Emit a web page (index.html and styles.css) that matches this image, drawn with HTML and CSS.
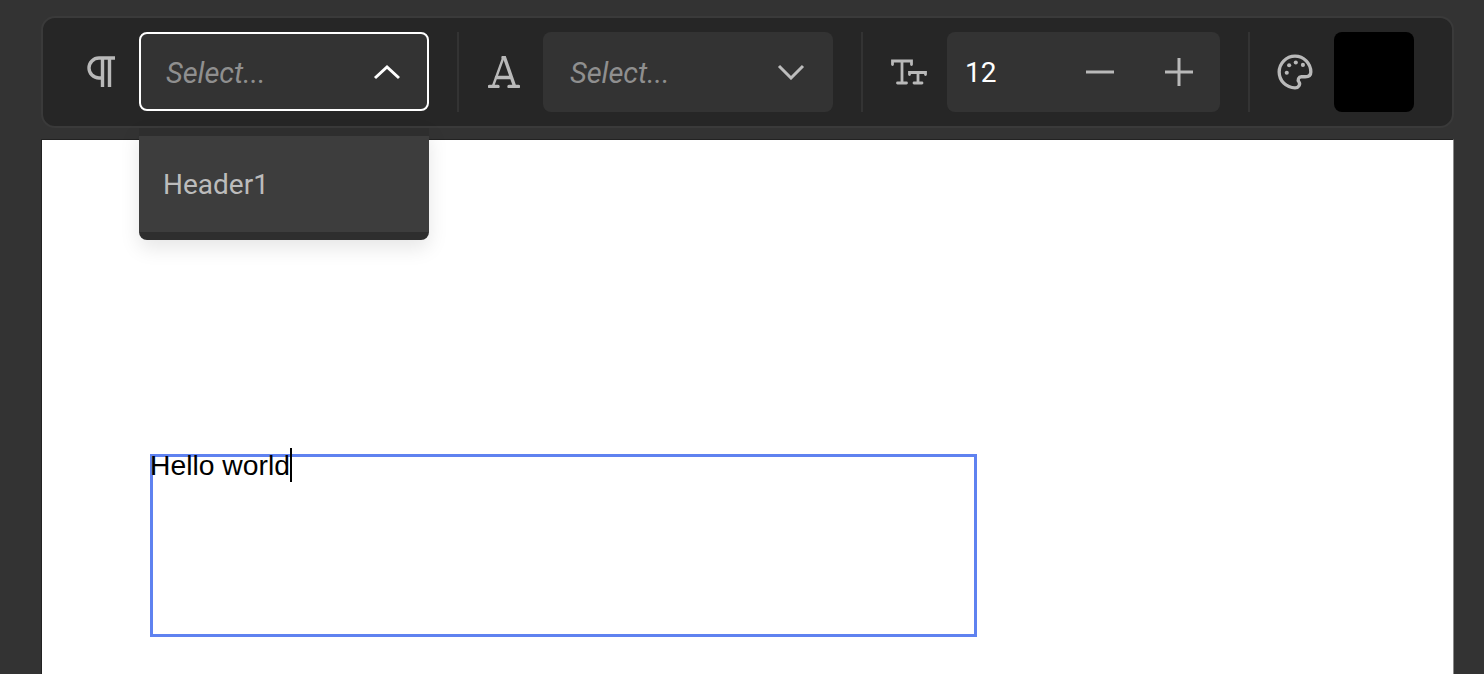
FILE: index.html
```html
<!DOCTYPE html>
<html lang="en">
<head>
<meta charset="utf-8">
<title>Editor</title>
<link rel="stylesheet" href="styles.css">
</head>
<body>
<div class="page">
  <div class="toolbar">
    <svg class="icon icon-para" viewBox="0 0 30 32" aria-hidden="true">
      <path d="M29 2H13a10 10 0 0 0 0 20H16.500M16.500 2V31M23.500 2V31"/>
    </svg>
    <div class="select select-open">
      <span class="placeholder">Select...</span>
      <svg class="chev chev-open" viewBox="0 0 28 16" aria-hidden="true"><path d="M2 14L14 3L26 14"/></svg>
      <div class="menu">
        <div class="menu-item">Header1</div>
      </div>
    </div>
    <div class="divider div-a"></div>
    <svg class="icon icon-font" viewBox="0 0 32 32" aria-hidden="true">
      <path class="thin" d="M15 2.500L5 30"/>
      <path d="M15 1.500H16.500L26.500 30M8.500 21.500H22.500M1.500 30.500H10M21 30.500H30.500"/>
    </svg>
    <div class="select">
      <span class="placeholder">Select...</span>
      <svg class="chev" viewBox="0 0 28 16" aria-hidden="true"><path d="M2 2L14 14L26 2"/></svg>
    </div>
    <div class="divider div-b"></div>
    <svg class="icon icon-size" viewBox="0 0 37 26" aria-hidden="true">
      <path d="M2.500 5.500V2H21.500V5.500M12 2V24M7.500 24H16.500M19.500 15.500V13.500H35.500V15.500M28 13.500V24M24 24H32"/>
    </svg>
    <div class="stepper">
      <span class="value">12</span>
      <svg class="step step-minus" viewBox="0 0 30 30" aria-hidden="true"><path d="M1 15H29"/></svg>
      <svg class="step step-plus" viewBox="0 0 30 30" aria-hidden="true"><path d="M1 15H29M15 1V29"/></svg>
    </div>
    <div class="divider div-c"></div>
    <svg class="icon icon-palette" viewBox="0 0 24 24" aria-hidden="true">
      <path d="M12 22a10 10 0 1 1 10-10c0 2.500-2 3-3.500 3H16a2 2 0 0 0-1.500 3.300c.5.7.5 1.700 0 2.400-.5.800-1.500 1.300-2.500 1.300z"/>
      <circle class="dot" cx="6.800" cy="12.500" r="1.300"/>
      <circle class="dot" cx="8.300" cy="7.700" r="1.300"/>
      <circle class="dot" cx="12.500" cy="6" r="1.300"/>
      <circle class="dot" cx="17" cy="7.500" r="1.300"/>
    </svg>
    <div class="swatch"></div>
  </div>
  <div class="canvas">
    <div class="textbox"><span class="textline">Hello world<span class="caret"></span></span></div>
  </div>
</div>
</body>
</html>
```
FILE: styles.css
```css
html, body {
  margin: 0;
  height: 100%;
  overflow: hidden;
  background: #333333;
}
body {
  font-family: Roboto, "Liberation Sans", sans-serif;
}
.page {
  height: 674px;
  padding: 16px 30px 0 41px;
  box-sizing: border-box;
  display: flex;
  flex-direction: column;
}
.toolbar {
  display: flex;
  align-items: center;
  height: 112px;
  box-sizing: border-box;
  flex: none;
  padding: 0 0 0 44px;
  background: #262626;
  border: 2px solid #3a3a3a;
  border-radius: 14px;
  position: relative;
  z-index: 2;
}
.icon {
  flex: none;
  fill: none;
  stroke: #b9b9b9;
  stroke-width: 3.400;
  stroke-linecap: round;
}
.icon .thin { stroke-width: 2.400; }
.icon-para { width: 30px; height: 32px; margin-right: 23px; margin-left: -1px; stroke-linecap: butt; }
.icon-font { width: 32px; height: 32px; margin-right: 23px; margin-left: -1px; }
.icon-size { width: 37px; height: 26px; margin-right: 20px; stroke-width: 2.800; }
.icon-palette { width: 38px; height: 38px; margin-right: 20px; margin-left: -1px; stroke-width: 2.100; }
.dot { fill: #b9b9b9; stroke: none; }
.select {
  flex: none;
  width: 290px;
  height: 80px;
  box-sizing: border-box;
  padding: 0 28px 0 27px;
  display: flex;
  align-items: center;
  justify-content: space-between;
  background: #333333;
  border-radius: 8px;
  position: relative;
}
.select-open {
  border: 2px solid #ffffff;
  padding: 0 26px 0 25px;
  height: 79px;
  margin-bottom: 1px;
}
.placeholder {
  font-style: italic;
  font-size: 29px;
  line-height: 34px;
  padding-top: 2px;
  color: #8f8f8f;
}
.chev {
  width: 28px;
  height: 16px;
  fill: none;
  stroke: #bdbdbd;
  stroke-width: 3;
}
.chev-open { stroke: #ffffff; }
.menu {
  position: absolute;
  left: -2px;
  right: -2px;
  top: 94px;
  height: 112px;
  box-sizing: border-box;
  padding: 8px 0;
  background: #2e2e2e;
  border-radius: 0 0 8px 8px;
  box-shadow: 0 8px 20px rgba(0, 0, 0, 0.1);
}
.menu-item {
  height: 96px;
  line-height: 98px;
  padding-left: 24px;
  font-size: 28px;
  color: #bcbcbc;
  background: #3d3d3d;
}
.divider {
  flex: none;
  width: 2px;
  height: 80px;
  background: #333333;
}
.div-a { margin: 0 30px 0 28px; }
.div-b { margin: 0 27px 0 28px; }
.div-c { margin: 0 27px 0 28px; }
.stepper {
  flex: none;
  width: 273px;
  height: 80px;
  box-sizing: border-box;
  padding: 0 26px 0 18px;
  display: flex;
  align-items: center;
  background: #333333;
  border-radius: 8px;
}
.value {
  flex: 1;
  font-size: 28px;
  line-height: 34px;
  padding-top: 2px;
  color: #ffffff;
}
.step {
  width: 30px;
  height: 30px;
  fill: none;
  stroke: #b9b9b9;
  stroke-width: 3;
}
.step-plus { margin-left: 49px; }
.swatch {
  flex: none;
  width: 80px;
  height: 80px;
  background: #000000;
  border-radius: 8px;
}
.canvas {
  flex: 1;
  margin-top: 11px;
  background: #ffffff;
  border-left: 1px solid #222222;
  border-top: 1px solid #222222;
  border-right: 1px solid #8a8a8a;
  position: relative;
}
.textbox {
  position: absolute;
  left: 108px;
  top: 314px;
  width: 827px;
  height: 183px;
  box-sizing: border-box;
  border: 3px solid #5f82f0;
}
.textline {
  display: block;
  margin: -6px 0 0 -3px;
  font-family: "Liberation Sans", Arial, sans-serif;
  font-size: 28.300px;
  line-height: 28px;
  color: #000000;
  position: relative;
  width: max-content;
}
.caret {
  position: absolute;
  right: -2px;
  top: -3px;
  width: 2px;
  height: 34px;
  background: #000000;
}
```
